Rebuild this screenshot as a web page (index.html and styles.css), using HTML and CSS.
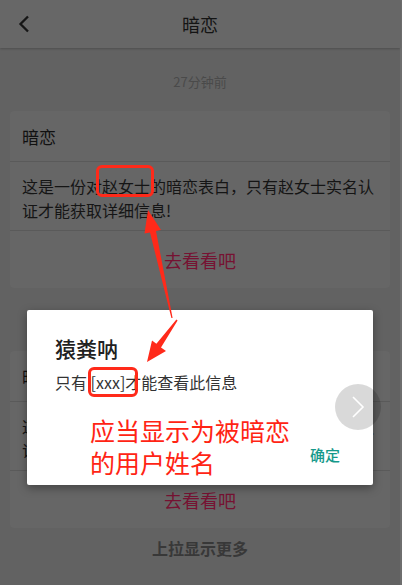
FILE: index.html
```html
<!DOCTYPE html>
<html lang="zh-CN">
<head>
    <meta charset="UTF-8">
    <meta name="viewport" content="width=device-width, initial-scale=1.0">
    <title>暗恋</title>
    <link rel="stylesheet" href="styles.css">
</head>
<body>
    <div class="screen">
        <header class="topbar">
            <span class="back">
                <svg width="12" height="18" viewBox="0 0 12 18"><path d="M10 1.5 L2.5 9 L10 16.5" fill="none" stroke="#161616" stroke-width="2.3"/></svg>
            </span>
            <h1>暗恋</h1>
            <span></span>
        </header>

        <main class="feed">
            <section class="item">
                <div class="time">27分钟前</div>
                <div class="card">
                    <div class="card-title">暗恋</div>
                    <p class="card-body">这是一份对赵女士的暗恋表白，只有赵女士实名认证才能获取详细信息!</p>
                    <div class="card-action">去看看吧</div>
                </div>
            </section>

            <section class="item">
                <div class="time">27分钟前</div>
                <div class="card">
                    <div class="card-title">暗恋</div>
                    <p class="card-body">这是一份对赵女士的暗恋表白，只有赵女士实名认证才能获取详细信息!</p>
                    <div class="card-action">去看看吧</div>
                </div>
            </section>

            <div class="more">上拉显示更多</div>
        </main>
    </div>

    <!-- dialog over the dimmed page -->
    <div class="dialog">
        <div class="dialog-title">猿粪呐</div>
        <div class="dialog-msg">只有 [xxx]才能查看此信息</div>
        <div class="dialog-actions">
            <span class="dialog-btn">确定</span>
        </div>
    </div>

    <div class="next-btn">
        <svg width="14" height="24" viewBox="0 0 14 24"><path d="M2 2 L12 12 L2 22" fill="none" stroke="#ffffff" stroke-width="1.6"/></svg>
    </div>

    <!-- red annotations -->
    <span class="mark mark-card"></span>
    <span class="mark mark-dialog"></span>
    <div class="note">应当显示为被暗恋<br>的用户姓名</div>
    <svg class="arrows" width="402" height="585" viewBox="0 0 402 585">
        <polygon points="148,210 161,230 156,231 172.6,318 171.4,318 150,232.5 144.5,233.5"/>
        <polygon points="147,362 152,340.5 156.4,343.8 176.4,319.6 177.6,320.4 161,347.6 166,351"/>
    </svg>
</body>
</html>
```

FILE: styles.css
```css
* {
    box-sizing: border-box;
}

body {
    margin: 0;
    width: 402px;
    height: 585px;
    overflow: hidden;
    position: relative;
    background: #6e6e6e;
    font-family: "Noto Sans CJK SC", "Noto Sans", sans-serif;
}

.screen {
    width: 400px;
    height: 585px;
    background: #626262;
}

/* Top bar */
.topbar {
    height: 48px;
    background: #676767;
    display: grid;
    grid-template-columns: 48px 1fr 48px;
    align-items: center;
    box-shadow: 0 1px 2px rgba(0, 0, 0, 0.2);
    position: relative;
}

.back {
    display: flex;
    justify-content: center;
}

.topbar h1 {
    margin: 0;
    text-align: center;
    font-size: 18px;
    font-weight: 400;
    color: #141414;
}

/* Feed */
.time {
    height: 63px;
    padding-top: 4px;
    display: flex;
    align-items: center;
    justify-content: center;
    font-size: 13px;
    color: #4a4a4a;
}

.card {
    margin: 0 10px;
    background: #666666;
    border-radius: 4px;
}

.card-title {
    height: 51px;
    padding-left: 12px;
    display: flex;
    align-items: center;
    font-size: 17px;
    color: #111111;
    border-bottom: 1px solid #5a5a5a;
}

.card-body {
    margin: 0;
    padding: 12px 12px 8px;
    font-size: 16px;
    line-height: 24px;
    color: #151515;
    border-bottom: 1px solid #5a5a5a;
}

.card-action {
    height: 57px;
    display: flex;
    align-items: center;
    justify-content: center;
    font-size: 18px;
    color: #761232;
}

.more {
    height: 40px;
    display: flex;
    align-items: center;
    justify-content: center;
    font-size: 16px;
    font-weight: 700;
    color: #383838;
}

/* Dialog */
.dialog {
    position: absolute;
    left: 27px;
    top: 310px;
    width: 346px;
    height: 175px;
    background: #ffffff;
    border-radius: 2px;
    box-shadow: 0 3px 10px rgba(0, 0, 0, 0.35);
    padding: 24px 25px 12px 28px;
    display: flex;
    flex-direction: column;
}

.dialog-title {
    font-size: 21px;
    line-height: 28px;
    font-weight: 500;
    color: #212121;
}

.dialog-msg {
    margin-top: 8px;
    font-size: 16px;
    line-height: 24px;
    color: #333333;
}

.dialog-actions {
    margin-top: auto;
    display: flex;
    justify-content: flex-end;
}

.dialog-btn {
    height: 36px;
    line-height: 36px;
    padding: 0 8px;
    font-size: 15px;
    font-weight: 500;
    color: #16998b;
}

.next-btn {
    position: absolute;
    left: 335px;
    top: 384px;
    width: 46px;
    height: 46px;
    border-radius: 50%;
    background: rgba(0, 0, 0, 0.15);
    display: flex;
    align-items: center;
    justify-content: center;
}

/* Annotations */
.mark {
    position: absolute;
    border: 3px solid #ff2a1a;
    border-radius: 6px;
}

.mark-card {
    left: 96px;
    top: 165px;
    width: 58px;
    height: 32px;
}

.mark-dialog {
    left: 88px;
    top: 367px;
    width: 50px;
    height: 30px;
}

.note {
    position: absolute;
    left: 90px;
    top: 414px;
    font-size: 25px;
    line-height: 32px;
    color: #ff2414;
}

.arrows {
    position: absolute;
    left: 0;
    top: 0;
    fill: #ff2a1a;
    pointer-events: none;
}
```
